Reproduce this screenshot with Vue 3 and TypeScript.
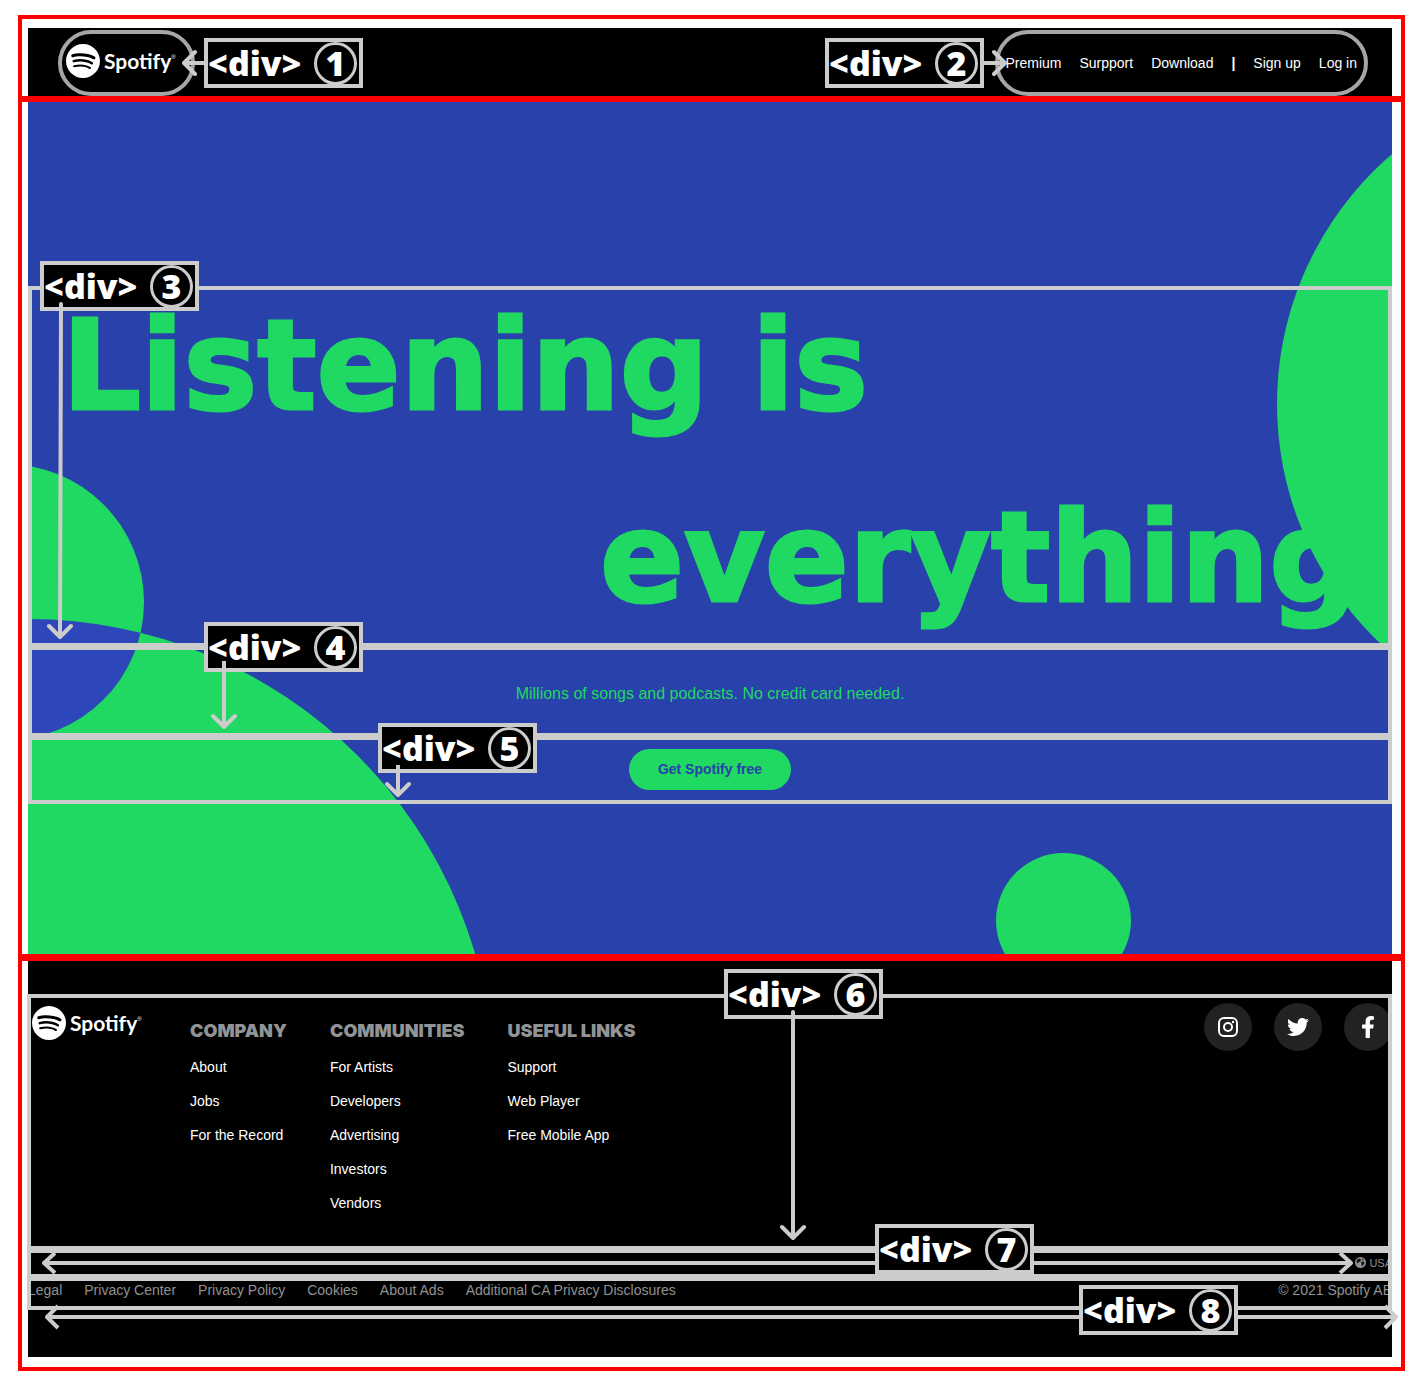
<script setup lang="ts">
interface LinkGroup {
  title: string
  links: string[]
}

const groups: LinkGroup[] = [
  { title: 'COMPANY', links: ['About', 'Jobs', 'For the Record'] },
  { title: 'COMMUNITIES', links: ['For Artists', 'Developers', 'Advertising', 'Investors', 'Vendors'] },
  { title: 'USEFUL LINKS', links: ['Support', 'Web Player', 'Free Mobile App'] },
]

const legal: string[] = [
  'Legal',
  'Privacy Center',
  'Privacy Policy',
  'Cookies',
  'About Ads',
  'Additional CA Privacy Disclosures',
]

const mark =
  'M12 0C5.4 0 0 5.4 0 12s5.4 12 12 12 12-5.4 12-12S18.66 0 12 0zm5.521 17.34c-.24.359-.66.48-1.021.24-2.82-1.74-6.36-2.101-10.561-1.141-.418.122-.779-.179-.899-.539-.12-.421.18-.78.54-.9 4.56-1.021 8.52-.6 11.64 1.32.42.18.479.659.301 1.02zm1.44-3.3c-.301.42-.841.6-1.262.3-3.239-1.98-8.159-2.58-11.939-1.38-.479.12-1.02-.12-1.14-.6-.12-.48.12-1.021.6-1.141C9.6 9.9 15 10.561 18.72 12.84c.361.181.54.78.241 1.2zm.12-3.36C15.24 8.4 8.82 8.16 5.16 9.301c-.6.179-1.2-.181-1.38-.721-.18-.601.18-1.2.72-1.381 4.26-1.26 11.28-1.02 15.721 1.621.539.3.719 1.02.419 1.56-.299.421-1.02.599-1.559.3z'
</script>

<template>
  <div class="page">
    <section class="region region-top">
      <header class="canvas bar">
        <div class="pill">
          <a class="logo" href="#">
            <svg viewBox="0 0 24 24" aria-hidden="true"><path :d="mark" /></svg>
            <span class="word">Spotify</span><span class="reg">®</span>
          </a>
        </div>
        <nav class="pill menu">
          <a href="#">Premium</a>
          <a href="#">Surpport</a>
          <a href="#">Download</a>
          <b>|</b>
          <a href="#">Sign up</a>
          <a href="#">Log in</a>
        </nav>
        <svg class="arrow arrow-1" width="24" height="28"><path d="M22 14H2M13 3L2 14L13 25" /></svg>
        <svg class="arrow arrow-2" width="26" height="28"><path d="M0 14H23M12 3L23 14L12 25" /></svg>
        <div class="tag tag-1">&lt;div&gt; <i>1</i></div>
        <div class="tag tag-2">&lt;div&gt; <i>2</i></div>
      </header>
    </section>

    <section class="region region-mid">
      <main class="canvas hero">
        <svg class="blobs" width="480" height="852" aria-hidden="true">
          <defs>
            <clipPath id="big"><circle cx="0" cy="983" r="466" /></clipPath>
          </defs>
          <circle class="green" cx="0" cy="983" r="466" />
          <circle class="green" cx="-22" cy="500" r="138" />
          <circle class="overlap" cx="-22" cy="500" r="138" clip-path="url(#big)" />
        </svg>
        <div class="disc disc-right"></div>
        <div class="disc disc-bottom"></div>

        <div class="frame title-box">
          <h1><span>Listening is</span><span class="second">everything</span></h1>
        </div>
        <div class="frame join lead-box">
          <p>Millions of songs and podcasts. No credit card needed.</p>
        </div>
        <div class="frame join cta-box">
          <button type="button">Get Spotify free</button>
        </div>

        <div class="tag tag-3">&lt;div&gt; <i>3</i></div>
        <div class="tag tag-4">&lt;div&gt; <i>4</i></div>
        <div class="tag tag-5">&lt;div&gt; <i>5</i></div>
        <svg class="arrow arrow-3" width="28" height="338"><path d="M15 2L14 335M3 324L14 335L25 324" /></svg>
        <svg class="arrow arrow-4" width="28" height="70"><path d="M14 0V66M3 55L14 66L25 55" /></svg>
        <svg class="arrow arrow-5" width="28" height="34"><path d="M14 0V30M3 19L14 30L25 19" /></svg>
      </main>
    </section>

    <section class="region region-end">
      <footer class="canvas foot">
        <div class="frame wide foot-main">
          <a class="logo" href="#">
            <svg viewBox="0 0 24 24" aria-hidden="true"><path :d="mark" /></svg>
            <span class="word">Spotify</span><span class="reg">®</span>
          </a>
          <div class="groups">
            <div v-for="g in groups" :key="g.title" class="group">
              <h2>{{ g.title }}</h2>
              <ul>
                <li v-for="l in g.links" :key="l"><a href="#">{{ l }}</a></li>
              </ul>
            </div>
          </div>
          <div class="social">
            <a href="#" aria-label="Instagram">
              <svg width="20" height="20" viewBox="0 0 20 20">
                <rect x="1" y="1" width="18" height="18" rx="5" fill="none" stroke="#fff" stroke-width="2" />
                <circle cx="10" cy="10" r="4" fill="none" stroke="#fff" stroke-width="2" />
                <circle cx="15" cy="5" r="1.2" />
              </svg>
            </a>
            <a href="#" aria-label="Twitter">
              <svg width="22" height="22" viewBox="0 0 512 512">
                <path d="M459.37 151.716c.325 4.548.325 9.097.325 13.645 0 138.72-105.583 298.558-298.558 298.558-59.452 0-114.68-17.219-161.137-47.106 8.447.974 16.568 1.299 25.34 1.299 49.055 0 94.213-16.568 130.274-44.832-46.132-.975-84.792-31.188-98.112-72.772 6.498.974 12.995 1.624 19.818 1.624 9.421 0 18.843-1.3 27.614-3.573-48.081-9.747-84.143-51.98-84.143-102.985v-1.299c13.969 7.797 30.214 12.67 47.431 13.319-28.264-18.843-46.781-51.005-46.781-87.391 0-19.492 5.197-37.36 14.294-52.954 51.655 63.675 129.3 105.258 216.365 109.807-1.624-7.797-2.599-15.918-2.599-24.04 0-57.828 46.782-104.934 104.934-104.934 30.213 0 57.502 12.67 76.67 33.137 23.715-4.548 46.456-13.32 66.599-25.34-7.798 24.366-24.366 44.833-46.132 57.827 21.117-2.273 41.584-8.122 60.426-16.243-14.292 20.791-32.161 39.308-52.628 54.253z" />
              </svg>
            </a>
            <a href="#" aria-label="Facebook">
              <svg width="14" height="22" viewBox="0 0 320 512">
                <path d="M279.14 288l14.22-92.66h-88.91v-60.13c0-25.35 12.42-50.06 52.24-50.06h40.42V6.26S260.43 0 225.36 0c-73.22 0-121.08 44.38-121.08 124.72v70.62H22.89V288h81.39v224h100.17V288z" />
              </svg>
            </a>
          </div>
        </div>
        <div class="frame wide join country">
          <svg width="11" height="11" viewBox="0 0 22 22" aria-hidden="true">
            <circle cx="11" cy="11" r="11" fill="#919191" />
            <path d="M4 5l5-2 3 2-1 4-4 1-1 3-3-3zM12 10l5-1 2 3-4 6-2-1v-4zM15 3l3 3-2 1-2-2z" fill="#111" />
          </svg>
          <span>USA</span>
        </div>
        <div class="frame wide join legal">
          <nav><a v-for="l in legal" :key="l" href="#">{{ l }}</a></nav>
          <span>© 2021 Spotify AB</span>
        </div>

        <div class="span span-7">
          <svg class="head" width="16" height="28"><path d="M16 14H2M13 4L2 14L13 24" /></svg>
          <div class="line"></div>
          <svg class="head" width="16" height="28"><path d="M0 14H14M3 4L14 14L3 24" /></svg>
        </div>
        <div class="span span-8">
          <svg class="head" width="16" height="28"><path d="M16 14H2M13 3L2 14L13 25" /></svg>
          <div class="line"></div>
          <svg class="head" width="16" height="28"><path d="M0 14H14M3 3L14 14L3 25" /></svg>
        </div>
        <div class="tag tag-6">&lt;div&gt; <i>6</i></div>
        <div class="tag tag-7">&lt;div&gt; <i>7</i></div>
        <div class="tag tag-8">&lt;div&gt; <i>8</i></div>
        <svg class="arrow arrow-6" width="28" height="232"><path d="M14 2V228M3 217L14 228L25 217" /></svg>
      </footer>
    </section>
  </div>
</template>

<style>
body {
  background: #fff;
}
</style>

<style scoped>
.page {
  box-sizing: border-box;
  min-width: 1180px;
  padding: 15px 15px 14px 18px;
  font: 14px/20px "Liberation Sans", Arial, sans-serif;
}
a {
  color: inherit;
  text-decoration: none;
}
.region {
  border: 4px solid #f00;
  padding: 0 9px 0 6px;
}
.region-top {
  border-bottom-width: 3px;
  padding-top: 9px;
}
.region-mid {
  border-top-width: 3px;
}
.region-end {
  border-top-width: 3px;
  padding-bottom: 10px;
}
.canvas {
  position: relative;
}

/* header */
.bar {
  display: flex;
  justify-content: space-between;
  padding: 2px 24px 0 30px;
  background: #000;
  color: #fff;
}
.pill {
  box-sizing: border-box;
  display: flex;
  align-items: center;
  height: 66px;
  padding: 0 15px 4px 4px;
  border: 4px solid #a6a6a6;
  border-radius: 33px;
}
.menu {
  gap: 18px;
  padding: 0 7px 0 6px;
}
.logo {
  display: flex;
  align-items: center;
  color: #fff;
}
.logo svg {
  width: 34px;
  height: 34px;
  margin-right: 4px;
  fill: #fff;
}
.word {
  font: 700 21px/34px Lato, sans-serif;
}
.reg {
  align-self: flex-start;
  margin-top: 8px;
  font-size: 6px;
  line-height: 10px;
}

/* hero */
.hero {
  overflow: hidden;
  padding: 184px 0 150px;
  background: #2941ab;
}
.blobs {
  position: absolute;
  left: 0;
  top: 0;
}
.green {
  fill: #1fd962;
}
.overlap {
  fill: #2d46b9;
}
.disc {
  position: absolute;
  border-radius: 50%;
  background: #1fd962;
}
.disc-right {
  top: -27px;
  right: -543px;
  width: 658px;
  height: 658px;
}
.disc-bottom {
  top: 751px;
  right: 261px;
  width: 135px;
  height: 135px;
}
.frame {
  position: relative;
  box-sizing: border-box;
}
.frame::after {
  content: "";
  position: absolute;
  inset: 0;
  border: 4px solid #ccc;
  pointer-events: none;
}
.join::after {
  border-top-width: 3px;
}
.wide::after {
  left: -1px;
}
.title-box {
  height: 361px;
  padding: 16px 34px 0;
}
h1 {
  display: flex;
  flex-direction: column;
  gap: 64px;
  margin: 0;
  color: #1fd962;
  font: 700 124px/128px "DejaVu Sans", sans-serif;
  -webkit-text-stroke: 3px #1fd962;
}
.second {
  align-self: flex-end;
}
.lead-box {
  display: flex;
  justify-content: center;
  align-items: center;
  height: 90px;
  padding-top: 4px;
}
.lead-box p {
  margin: 0;
  color: #1fd962;
  font-size: 16px;
}
.cta-box {
  display: flex;
  justify-content: center;
  align-items: flex-start;
  height: 67px;
  padding-top: 12px;
}
button {
  height: 41px;
  padding: 0 29px 2px;
  border: 0;
  border-radius: 21px;
  background: #1fd962;
  color: #2941ab;
  font: 700 14px/20px "Liberation Sans", Arial, sans-serif;
}

/* footer */
.foot {
  padding: 33px 0 47px;
  background: #000;
  color: #fff;
}
.foot-main {
  display: flex;
  align-items: flex-start;
  height: 256px;
  padding: 9px 0 0 4px;
}
.foot-main .logo {
  width: 158px;
  margin-top: 3px;
}
.groups {
  display: flex;
  flex: 1;
  gap: 43px;
  padding-top: 18px;
}
h2 {
  margin: 0 0 9px;
  color: #919496;
  font: 900 18px/20px Inter, sans-serif;
}
ul {
  margin: 0;
  padding: 0;
  list-style: none;
}
li {
  line-height: 34px;
}
.social {
  display: flex;
  gap: 22px;
}
.social a {
  display: flex;
  align-items: center;
  justify-content: center;
  width: 48px;
  height: 48px;
  border-radius: 50%;
  background: #222;
}
.social svg {
  fill: #fff;
}
.country {
  display: flex;
  align-items: center;
  justify-content: flex-end;
  gap: 3px;
  height: 28px;
  padding-bottom: 3px;
  color: #919191;
  font-size: 11px;
}
.legal {
  display: flex;
  justify-content: space-between;
  height: 32px;
  padding-top: 2px;
  color: #919191;
}
.legal nav {
  display: flex;
  gap: 22px;
}

/* annotations */
.tag {
  position: absolute;
  box-sizing: border-box;
  display: flex;
  align-items: center;
  justify-content: space-between;
  width: 159px;
  height: 50px;
  padding: 0 2px 0 0;
  border: 4px solid #ccc;
  background: #000;
  color: #fff;
  font: 900 34px/42px "Noto Sans", sans-serif;
}
.tag i {
  box-sizing: border-box;
  width: 43px;
  height: 43px;
  border: 3px solid #ccc;
  border-radius: 50%;
  font-style: normal;
  line-height: 37px;
  text-align: center;
}
.arrow {
  position: absolute;
}
.arrow path,
.head path {
  fill: none;
  stroke: #ccc;
  stroke-width: 4;
  stroke-linejoin: round;
}
.arrow path {
  stroke-linecap: round;
}
.span {
  position: absolute;
  display: flex;
  align-items: center;
}
.line {
  flex: 1;
  height: 4px;
  background: #ccc;
}
.tag-1 { left: 176px; top: 10px; }
.tag-2 { right: 408px; top: 10px; }
.tag-3 { left: 12px; top: 159px; }
.tag-4 { left: 176px; top: 520px; }
.tag-5 { left: 350px; top: 621px; }
.tag-6 { left: 696px; top: 8px; }
.tag-7 { right: 358px; top: 263px; }
.tag-8 { right: 154px; top: 324px; }
.arrow-1 { left: 154px; top: 21px; }
.arrow-2 { right: 384px; top: 21px; }
.arrow-3 { left: 18px; top: 200px; }
.arrow-4 { left: 182px; top: 559px; }
.arrow-5 { left: 356px; top: 663px; }
.arrow-6 { left: 751px; top: 49px; }
.span-7 { left: 14px; right: 39px; top: 288px; }
.span-8 { left: 17px; right: -6px; top: 342px; }
</style>
